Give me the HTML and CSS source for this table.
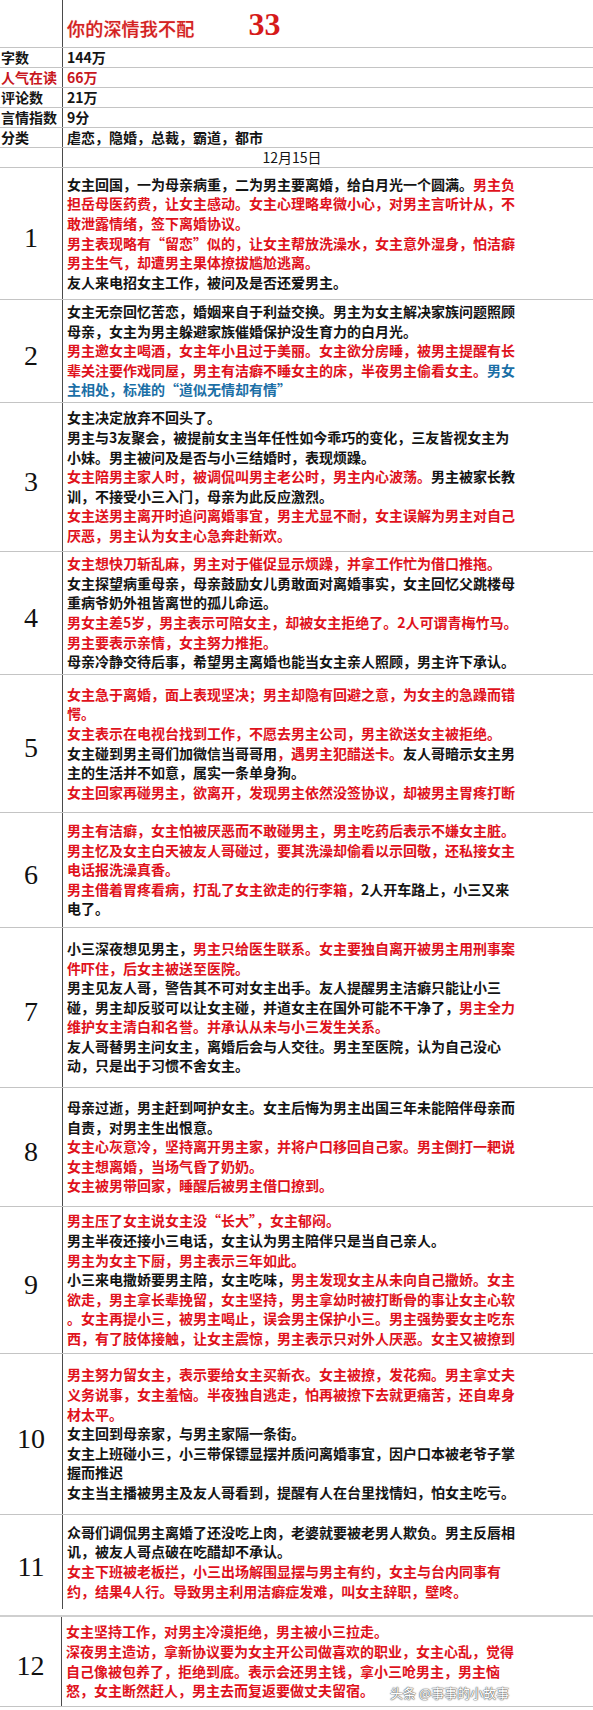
FILE: index.html
```html
<!DOCTYPE html>
<html lang="zh-CN">
<head>
<meta charset="utf-8">
<title>你的深情我不配</title>
<link rel="stylesheet" href="styles.css">
</head>
<body>
<div class="sheet">
  <div class="row title-row">
    <div class="lab"></div>
    <div class="val title"><span class="t-name">你的深情我不配</span><span class="t-num">33</span></div>
    <div class="ext"></div>
  </div>
  <div class="row info"><div class="lab">字数</div><div class="val">144万</div><div class="ext"></div></div>
  <div class="row info hot"><div class="lab">人气在读</div><div class="val">66万</div><div class="ext"></div></div>
  <div class="row info"><div class="lab">评论数</div><div class="val">21万</div><div class="ext"></div></div>
  <div class="row info"><div class="lab">言情指数</div><div class="val">9分</div><div class="ext"></div></div>
  <div class="row info"><div class="lab">分类</div><div class="val">虐恋，隐婚，总裁，霸道，都市</div><div class="ext"></div></div>
  <div class="row date"><div class="lab"></div><div class="val">12月15日</div><div class="ext"></div></div>

  <div class="row ep r1">
    <div class="lab num">1</div>
    <div class="val text">
      <div class="ln">女主回国，一为母亲病重，二为男主要离婚，给白月光一个圆满。<span class="r">男主负</span></div>
      <div class="ln r">担岳母医药费，让女主感动。女主心理略卑微小心，对男主言听计从，不</div>
      <div class="ln r">敢泄露情绪，签下离婚协议。</div>
      <div class="ln r">男主表现略有“留恋”似的，让女主帮放洗澡水，女主意外湿身，怕洁癖</div>
      <div class="ln r">男主生气，却遭男主果体撩拔尴尬逃离。</div>
      <div class="ln">友人来电招女主工作，被问及是否还爱男主。</div>
    </div>
    <div class="ext"></div>
  </div>

  <div class="row ep r2">
    <div class="lab num">2</div>
    <div class="val text">
      <div class="ln">女主无奈回忆苦恋，婚姻来自于利益交换。男主为女主解决家族问题照顾</div>
      <div class="ln">母亲，女主为男主躲避家族催婚保护没生育力的白月光。</div>
      <div class="ln r">男主邀女主喝酒，女主年小且过于美丽。女主欲分房睡，被男主提醒有长</div>
      <div class="ln"><span class="r">辈关注要作戏同屋，男主有洁癖不睡女主的床，半夜男主偷看女主。</span><span class="b">男女</span></div>
      <div class="ln b">主相处，标准的“道似无情却有情”</div>
    </div>
    <div class="ext"></div>
  </div>

  <div class="row ep r3">
    <div class="lab num">3</div>
    <div class="val text">
      <div class="ln">女主决定放弃不回头了。</div>
      <div class="ln">男主与3友聚会，被提前女主当年任性如今乖巧的变化，三友皆视女主为</div>
      <div class="ln">小妹。男主被问及是否与小三结婚时，表现烦躁。</div>
      <div class="ln"><span class="r">女主陪男主家人时，被调侃叫男主老公时，男主内心波荡。</span>男主被家长教</div>
      <div class="ln">训，不接受小三入门，母亲为此反应激烈。</div>
      <div class="ln r">女主送男主离开时追问离婚事宜，男主尤显不耐，女主误解为男主对自己</div>
      <div class="ln r">厌恶，男主认为女主心急奔赴新欢。</div>
    </div>
    <div class="ext"></div>
  </div>

  <div class="row ep r4">
    <div class="lab num">4</div>
    <div class="val text">
      <div class="ln r">女主想快刀斩乱麻，男主对于催促显示烦躁，并拿工作忙为借口推拖。</div>
      <div class="ln">女主探望病重母亲，母亲鼓励女儿勇敢面对离婚事实，女主回忆父跳楼母</div>
      <div class="ln">重病爷奶外祖皆离世的孤儿命运。</div>
      <div class="ln r">男女主差5岁，男主表示可陪女主，却被女主拒绝了。2人可谓青梅竹马。</div>
      <div class="ln r">男主要表示亲情，女主努力推拒。</div>
      <div class="ln">母亲冷静交待后事，希望男主离婚也能当女主亲人照顾，男主许下承认。</div>
    </div>
    <div class="ext"></div>
  </div>

  <div class="row ep r5">
    <div class="lab num">5</div>
    <div class="val text">
      <div class="ln r">女主急于离婚，面上表现坚决；男主却隐有回避之意，为女主的急躁而错</div>
      <div class="ln r">愕。</div>
      <div class="ln r">女主表示在电视台找到工作，不愿去男主公司，男主欲送女主被拒绝。</div>
      <div class="ln">女主碰到男主哥们加微信当哥哥用<span class="r">，遇男主犯醋送卡。</span>友人哥暗示女主男</div>
      <div class="ln">主的生活并不如意，属实一条单身狗。</div>
      <div class="ln r">女主回家再碰男主，欲离开，发现男主依然没签协议，却被男主胃疼打断</div>
    </div>
    <div class="ext"></div>
  </div>

  <div class="row ep r6">
    <div class="lab num">6</div>
    <div class="val text">
      <div class="ln r">男主有洁癖，女主怕被厌恶而不敢碰男主，男主吃药后表示不嫌女主脏。</div>
      <div class="ln r">男主忆及女主白天被友人哥碰过，要其洗澡却偷看以示回敬，还私接女主</div>
      <div class="ln r">电话报洗澡真香。</div>
      <div class="ln"><span class="r">男主借着胃疼看病，打乱了女主欲走的行李箱，</span>2人开车路上，小三又来</div>
      <div class="ln">电了。</div>
    </div>
    <div class="ext"></div>
  </div>

  <div class="row ep r7">
    <div class="lab num">7</div>
    <div class="val text">
      <div class="ln">小三深夜想见男主，<span class="r">男主只给医生联系。女主要独自离开被男主用刑事案</span></div>
      <div class="ln r">件吓住，后女主被送至医院。</div>
      <div class="ln">男主见友人哥，警告其不可对女主出手。友人提醒男主洁癖只能让小三</div>
      <div class="ln">碰，男主却反驳可以让女主碰，并道女主在国外可能不干净了，<span class="r">男主全力</span></div>
      <div class="ln r">维护女主清白和名誉。并承认从未与小三发生关系。</div>
      <div class="ln">友人哥替男主问女主，离婚后会与人交往。男主至医院，认为自己没心</div>
      <div class="ln">动，只是出于习惯不舍女主。</div>
    </div>
    <div class="ext"></div>
  </div>

  <div class="row ep r8">
    <div class="lab num">8</div>
    <div class="val text">
      <div class="ln">母亲过逝，男主赶到呵护女主。女主后悔为男主出国三年未能陪伴母亲而</div>
      <div class="ln">自责，对男主生出恨意。</div>
      <div class="ln r">女主心灰意冷，坚持离开男主家，并将户口移回自己家。男主倒打一耙说</div>
      <div class="ln r">女主想离婚，当场气昏了奶奶。</div>
      <div class="ln r">女主被男带回家，睡醒后被男主借口撩到。</div>
    </div>
    <div class="ext"></div>
  </div>

  <div class="row ep r9">
    <div class="lab num">9</div>
    <div class="val text">
      <div class="ln r">男主压了女主说女主没“长大”，女主郁闷。</div>
      <div class="ln">男主半夜还接小三电话，女主认为男主陪伴只是当自己亲人。</div>
      <div class="ln r">男主为女主下厨，男主表示三年如此。</div>
      <div class="ln">小三来电撒娇要男主陪，女主吃味，<span class="r">男主发现女主从未向自己撒娇。女主</span></div>
      <div class="ln r">欲走，男主拿长辈挽留，女主坚持，男主拿幼时被打断骨的事让女主心软</div>
      <div class="ln r">。女主再提小三，被男主喝止，误会男主保护小三。男主强势要女主吃东</div>
      <div class="ln r">西，有了肢体接触，让女主震惊，男主表示只对外人厌恶。女主又被撩到</div>
    </div>
    <div class="ext"></div>
  </div>

  <div class="row ep r10">
    <div class="lab num">10</div>
    <div class="val text">
      <div class="ln r">男主努力留女主，表示要给女主买新衣。女主被撩，发花痴。男主拿丈夫</div>
      <div class="ln r">义务说事，女主羞恼。半夜独自逃走，怕再被撩下去就更痛苦，还自卑身</div>
      <div class="ln r">材太平。</div>
      <div class="ln">女主回到母亲家，与男主家隔一条街。</div>
      <div class="ln">女主上班碰小三，小三带保镖显摆并质问离婚事宜，因户口本被老爷子掌</div>
      <div class="ln">握而推迟</div>
      <div class="ln">女主当主播被男主及友人哥看到，提醒有人在台里找情妇，怕女主吃亏。</div>
    </div>
    <div class="ext"></div>
  </div>

  <div class="row ep r11">
    <div class="lab num">11</div>
    <div class="val text">
      <div class="ln">众哥们调侃男主离婚了还没吃上肉，老婆就要被老男人欺负。男主反唇相</div>
      <div class="ln">讥，被友人哥点破在吃醋却不承认。</div>
      <div class="ln r">女主下班被老板拦，小三出场解围显摆与男主有约，女主与台内同事有</div>
      <div class="ln r">约，结果4人行。导致男主利用洁癖症发难，叫女主辞职，壁咚。</div>
    </div>
    <div class="ext"></div>
  </div>

  <div class="gap"></div>

  <div class="row ep r12">
    <div class="lab num">12</div>
    <div class="val text">
      <div class="ln r">女主坚持工作，对男主冷漠拒绝，男主被小三拉走。</div>
      <div class="ln r">深夜男主造访，拿新协议要为女主开公司做喜欢的职业，女主心乱，觉得</div>
      <div class="ln r">自己像被包养了，拒绝到底。表示会还男主钱，拿小三呛男主，男主恼</div>
      <div class="ln r">怒，女主断然赶人，男主去而复返要做丈夫留宿。</div>
    </div>
    <div class="ext"></div>
    <div class="watermark">头条 @事事的小故事</div>
  </div>
</div>
</body>
</html>
```

FILE: styles.css
```css
* {
  box-sizing: border-box;
  margin: 0;
  padding: 0;
}

html, body {
  background: #ffffff;
}

body {
  width: 593px;
  height: 1710px;
  overflow: hidden;
  font-family: "Noto Sans CJK SC", "Noto Sans", sans-serif;
  color: #141414;
}

.sheet {
  width: 593px;
}

.row {
  position: relative;
  display: grid;
  grid-template-columns: 63px 458px 1fr;
  border-bottom: 1px solid #c4c4c4;
}

.lab {
  border-right: 1px solid #4a4a4a;
  display: flex;
  align-items: center;
  white-space: nowrap;
}

.val {
  display: flex;
  flex-direction: column;
  justify-content: center;
  padding-left: 4px;
  white-space: nowrap;
}

/* title row */
.title-row {
  height: 48px;
}

.title-row .val {
  flex-direction: row;
  align-items: center;
  justify-content: flex-start;
  padding-top: 8px;
}

.t-name {
  font-size: 18px;
  font-weight: 500;
  color: #d42222;
  letter-spacing: 0.2px;
  text-shadow: 0 0 1px rgba(220, 40, 40, 0.45);
}

.t-num {
  margin-left: 54px;
  font-family: "Liberation Serif", "DejaVu Serif", serif;
  font-size: 32px;
  font-weight: bold;
  color: #d61a1a;
  line-height: 1;
  position: relative;
  top: -4px;
}

/* info rows */
.info {
  height: 20px;
  font-size: 14px;
  font-weight: bold;
  line-height: 19px;
}

.info .lab {
  padding-left: 1px;
}

.hot {
  color: #c8161d;
}

.date {
  height: 20px;
  font-size: 14px;
  line-height: 19px;
}

.date .val {
  align-items: center;
  padding-left: 0;
}

/* episode rows */
.text {
  font-size: 14px;
  font-weight: bold;
  line-height: 19.6px;
}

.num {
  justify-content: center;
  padding-top: 9px;
  font-family: "Liberation Serif", "DejaVu Serif", serif;
  font-size: 28px;
  font-weight: normal;
  color: #111;
}

.r { color: #e0121c; }
.b { color: #1b6fa6; }

.r1 { height: 132px; }
.r2 { height: 103px; }
.r3 { height: 149px; }
.r4 { height: 123px; }
.r5 { height: 138px; }
.r6 { height: 115px; }
.r7 { height: 160px; }
.r8 { height: 119px; }
.r9 { height: 147px; }
.r10 { height: 161px; }
.r11 { height: 94px; border-bottom: none; }

.gap {
  height: 8px;
  border-bottom: 2px solid #cfcfcf;
}

.r12 {
  height: 90px;
  grid-template-columns: 62px 459px 1fr;
}

.watermark {
  position: absolute;
  left: 390px;
  top: 66px;
  font-size: 13px;
  font-weight: normal;
  color: #ffffff;
  white-space: nowrap;
  text-shadow: 0 0 1px #555, 0 0 1px #555, 0 0 2px #888;
}
```
